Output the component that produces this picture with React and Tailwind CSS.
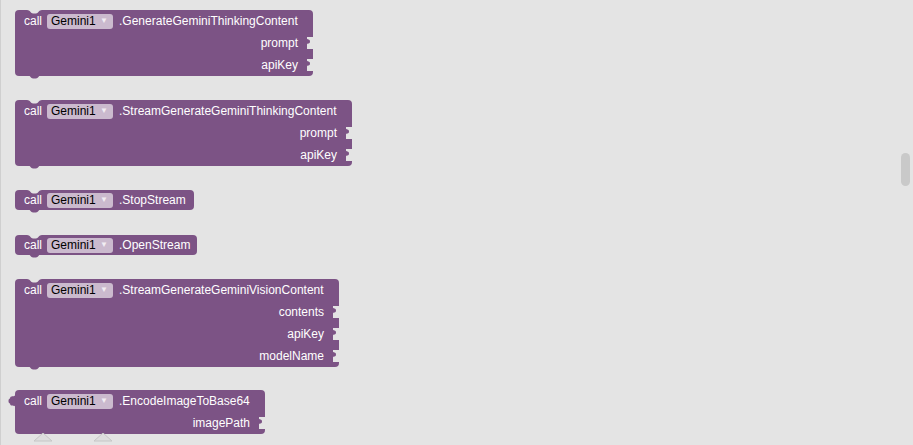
import React from "react";

const BG = "#e4e4e4";
const PURPLE = "#7c5385";

const blocks = [
  { method: "GenerateGeminiThinkingContent", inputs: ["prompt", "apiKey"], w: "w-[298px]", mt: "mt-[10px]" },
  { method: "StreamGenerateGeminiThinkingContent", inputs: ["prompt", "apiKey"], w: "w-[337px]", mt: "mt-[24px]" },
  { method: "StopStream", inputs: [], w: "w-[179px]", mt: "mt-[24px]" },
  { method: "OpenStream", inputs: [], w: "w-[182px]", mt: "mt-[25px]" },
  { method: "StreamGenerateGeminiVisionContent", inputs: ["contents", "apiKey", "modelName"], w: "w-[324px]", mt: "mt-[24px]" },
  { method: "EncodeImageToBase64", inputs: ["imagePath"], w: "w-[250px]", mt: "mt-[23px]", output: true },
];

function Socket() {
  // value input cut into the right edge
  return (
    <svg className="absolute right-0 top-[5px]" width="7" height="12" viewBox="0 0 7 12">
      <path d="M7 0 H1 V1.5 C1 3 4 1.5 4 4.5 C4 7.5 1 6 1 7.5 V12 H7 Z" fill={BG} />
    </svg>
  );
}

function Block({ method, inputs, w, mt, output }) {
  const single = inputs.length === 0;
  return (
    <div className={`relative ${w} ${mt} rounded-[4px] bg-[#7c5385] text-[12px] text-white`}>
      {!output && (
        <svg className="absolute left-[12px] top-0" width="15" height="4" viewBox="0 0 15 4">
          <path d="M0 0 C3 0 4 3.5 6 3.5 H9 C11 3.5 12 0 15 0 Z" fill={BG} />
        </svg>
      )}
      {!output && (
        <svg className="absolute left-[12px] -bottom-[3px]" width="15" height="4" viewBox="0 0 15 4">
          <path d="M0 0 C3 0 4 3.5 6 3.5 H9 C11 3.5 12 0 15 0 Z" fill={PURPLE} />
        </svg>
      )}
      {output && (
        <svg className="absolute -left-[7px] top-[4px]" width="8" height="14" viewBox="0 0 8 14">
          <path d="M8 0 H7 V1.5 C7 3 2 1 2 4.5 C0 4.5 0 9.5 2 9.5 C2 13 7 11 7 12.5 V14 H8 Z" fill={PURPLE} />
        </svg>
      )}
      <div className={`flex items-center pl-[9px] ${single ? "h-[20px]" : "h-[22px]"}`}>
        <span>call</span>
        <span className="ml-[5px] flex h-[15px] w-[66px] items-center justify-between rounded-[3px] bg-[#cbbace] pl-[4px] pr-[5px] text-black">
          <span>Gemini1</span>
          <span className="text-[8px] text-[#f2eef3]">▼</span>
        </span>
        <span className="ml-[6px]">.{method}</span>
      </div>
      {inputs.map((name) => (
        <div key={name} className="relative flex h-[22px] items-center justify-end pr-[15px]">
          <span>{name}</span>
          <Socket />
        </div>
      ))}
    </div>
  );
}

export default function App() {
  return (
    <div
      className="relative h-[445px] w-[913px] overflow-hidden border-l border-[#cfcfcf] bg-[#e4e4e4]"
      style={{ fontFamily: '"Liberation Sans", Arial, sans-serif' }}
    >
      <div className="flex flex-col pl-[14px]">
        {blocks.map((b) => (
          <Block key={b.method} {...b} />
        ))}
      </div>
      <svg className="absolute left-[32px] top-[433px]" width="82" height="10" viewBox="0 0 82 10">
        <path d="M1 8 L10 0 L19 8 Z" fill="#dedede" stroke="#c6c6c6" />
        <path d="M61 8 L70 0 L79 8 Z" fill="#dedede" stroke="#c6c6c6" />
      </svg>
      <div className="absolute left-[900px] top-[153px] h-[33px] w-[9px] rounded-[5px] bg-[#c9c9c9]" />
    </div>
  );
}
